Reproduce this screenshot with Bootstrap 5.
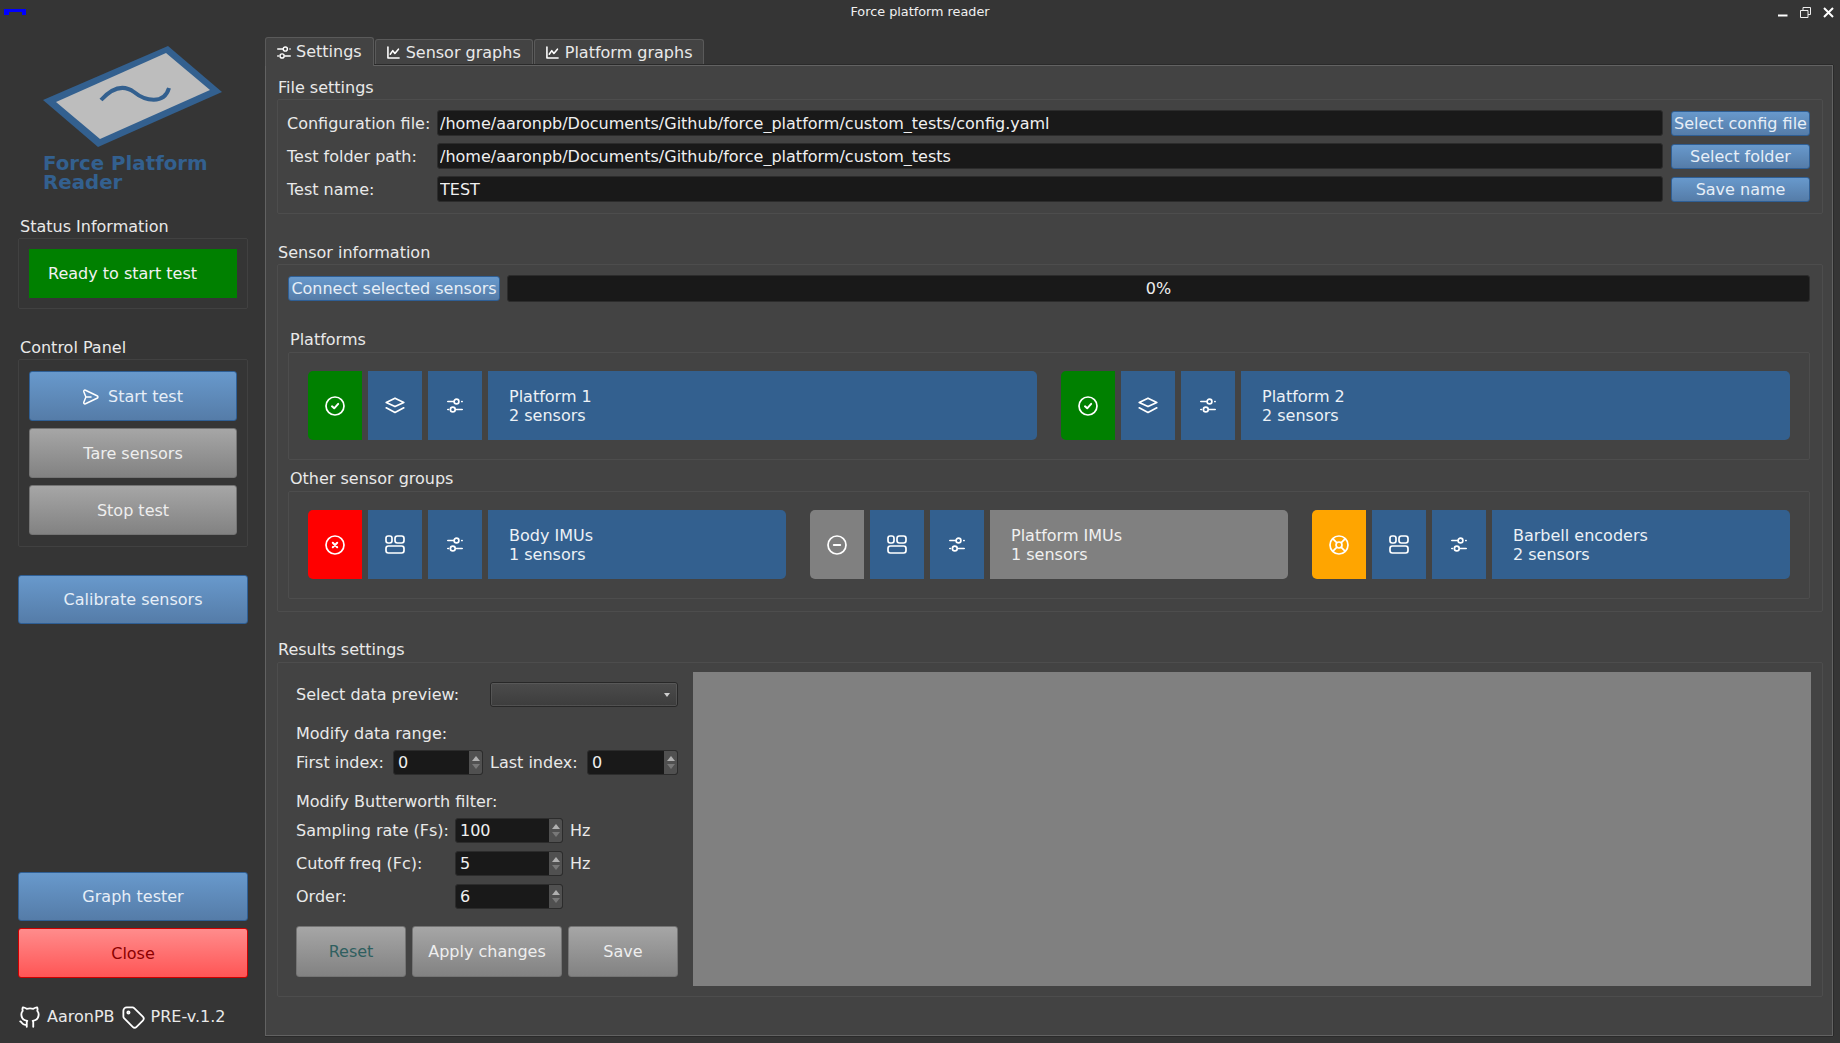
<!DOCTYPE html>
<html lang="en">
<head>
<meta charset="utf-8">
<title>Force platform reader</title>
<link href="https://cdn.jsdelivr.net/npm/bootstrap@5.3.0/dist/css/bootstrap.min.css" rel="stylesheet">
<style>
html,body{height:100%}
body{background:#353535;color:#e9e9e9;font:16px/24px "DejaVu Sans",sans-serif;overflow:hidden}
svg{display:block;flex:none}
.ic{fill:none;stroke:#fff;stroke-width:1.7;stroke-linecap:round;stroke-linejoin:round}
.app{height:1043px;padding-bottom:7px}
.titlebar{height:24px;display:grid;grid-template-columns:1fr auto 1fr;font-size:12.8px;line-height:24px;color:#f0f0f0}
.win-btns{justify-self:end;gap:12px;padding-right:6px}
.sidebar{width:265px;padding:0 17px 0 18px}
.logo{margin-top:16px;height:114px}
.logo-text{margin:0 0 0 25px;font-size:19.8px;font-weight:700;line-height:19px;color:#33608f}
.lbl{height:24px;line-height:26px}
.gbox{border:1px solid #414141;border-radius:2px}
.side-box{padding:10px}
.status{background:#008000;height:49px;line-height:49px;padding-left:19px;color:#f2f2f2}
.q-btn,.q-btn:hover,.q-btn:active,.q-btn:focus{display:flex;align-items:center;justify-content:center;gap:9px;padding:0;font-size:16px;line-height:20px;border-radius:3px;border:1px solid #2f5f95;background:linear-gradient(#6899cc,#557ca8);color:#e6eef7;white-space:nowrap}
.q-gray,.q-gray:hover,.q-gray:active,.q-gray:focus{border-color:#747474;background:linear-gradient(#a6a6a6,#828282);color:#eeeeee}
.q-red,.q-red:hover,.q-red:active,.q-red:focus{border-color:#cc0000;background:linear-gradient(#ff8c8c,#ff5555);color:#8b0000}
.h49{height:49px}.h50{height:50px;padding-top:2px}.h51{height:51px}
.ctrl{padding:11px 10px}
.footer{height:24px;margin:27px 0 7px -1px;line-height:28px}
.tabs-row{margin-top:13px}
.nav-tabs.qt{border:0;gap:1px;height:28px;align-items:flex-end}
.nav-tabs.qt .nav-link{display:flex;align-items:center;height:26px;padding:0 11px 0 11px;gap:6px;margin:0;color:#e9e9e9;background:#434343;border:1px solid #5a5a5a;border-bottom:0;border-radius:3px 3px 0 0;font-size:16px;line-height:24px}
.nav-tabs.qt .nav-link.active{height:29px;margin-bottom:-1px;gap:5px;z-index:1;position:relative}
.pane{background:#434343;border:1px solid #626262;box-shadow:0 -1px 0 #2a2a2a,1px 0 0 #2a2a2a,0 1px 0 #2a2a2a;padding:9px 9px 0 11px;flex:1;min-height:0}
.gb2{border:1px solid #4d4d4d;border-radius:2px}
.file-box{padding:10px 12px 11px 9px}
.file-box .row-f{height:26px;gap:8px}
.f-lbl{width:142px;flex:none;line-height:28px;white-space:nowrap}
.q-input.form-control,.q-input.form-control:focus{flex:1;min-width:0;height:26px;min-height:0;padding:0 2px;background:#191919;border:1px solid #2c2c2c;border-radius:3px;color:#f0f0f0;font-size:16px;line-height:24px;box-shadow:none}
.h25{height:25px}
.sel-btn{width:139px;flex:none;margin-top:1px}
.sensor-box{padding:10px 12px 12px 10px}
.q-progress.progress{height:27px;background:#191919;border:1px solid #2c2c2c;border-radius:3px;font-size:16px;color:#eee}
.sub-lbl{height:25px;line-height:26px;padding-left:2px}
.inner{padding:18px 19px 19px 19px;gap:24px}
.grp{flex:1 1 0;height:69px;gap:6px;min-width:0}
.sw{width:54px;background:#33608f}
.sw.green{background:#008000}.sw.red{background:#ff0000}.sw.orange{background:#ffa500}.sw.gray,.bar.gray{background:#808080}
.sw.first{border-radius:5px 0 0 5px}
.bar{flex:1;background:#33608f;border-radius:0 5px 5px 0;padding-left:21px;line-height:19px;color:#ecf1f6}
.bar.gray{color:#f0f0f0}
.res-box{padding:9px 11px 10px 18px;height:335px;gap:15px}
.res-left{width:382px;flex:none}
.canvas{flex:1;background:#808080}
.combo.btn,.combo.btn:hover{width:188px;height:25px;padding:0 7px 0 0;background:linear-gradient(#4b4b4b,#3d3d3d);border:1px solid #282828;box-shadow:0 0 0 .5px #666 inset;border-radius:3px;justify-content:flex-end}
.combo.dropdown-toggle::after{margin:0;border-top:4px solid #cfcfcf;border-left:3.5px solid transparent;border-right:3.5px solid transparent;border-bottom:0}
.spin{height:25px;border:1px solid #2c2c2c;border-radius:3px;background:#191919;overflow:hidden}
.spin .val{flex:1;padding-left:4px;line-height:23px;color:#f0f0f0}
.spin .arr{width:13px;background:#505050;gap:3px}
.tri-u,.tri-d{width:0;height:0;border-left:4.5px solid transparent;border-right:4.5px solid transparent}
.tri-u{border-bottom:5px solid #b0b0b0}.tri-d{border-top:5px solid #787878}
.w90{width:90px}.w91{width:91px}.w108{width:108px}
.f-short{width:97px;line-height:26px}.f-long{width:159px;line-height:26px}
.hz{margin-left:7px;line-height:26px}
</style>
</head>
<body>
<svg width="0" height="0" class="position-absolute">
<symbol id="i-sliders" viewBox="0 0 16 15"><path d="M.8 3.500h5.900M14.800 3.500h.3M.8 11.500h.7M9.400 11.500h5.800"/><circle cx="9.500" cy="3.500" r="2.400"/><circle cx="5.800" cy="11.500" r="2.400"/></symbol>
<symbol id="i-chart" viewBox="0 0 14 14"><path d="M1 1v12h12M3.500 8.800 6.200 5l2.300 3 3.800-4.600"/></symbol>
<symbol id="i-stack" viewBox="0 0 20 17"><path d="M10 1.200 1.200 5.400 10 9.600l8.800-4.200zM1.200 10.800l8.800 4.600 8.800-4.600"/></symbol>
<symbol id="i-layout" viewBox="0 0 20 19"><rect x="1" y="1" width="6" height="7" rx="2.200"/><rect x="10" y="1" width="9" height="7" rx="2.400"/><rect x="1" y="11" width="18" height="7" rx="2.400"/></symbol>
<symbol id="i-check" viewBox="0 0 20 20"><circle cx="10" cy="10" r="9"/><path d="m7 10.300 2.200 2 4-4.400" stroke-width="2"/></symbol>
<symbol id="i-x" viewBox="0 0 20 20"><circle cx="10" cy="10" r="9"/><path d="m7.800 7.800 4.400 4.400m0-4.400-4.400 4.400" stroke-width="2"/></symbol>
<symbol id="i-minus" viewBox="0 0 20 20"><circle cx="10" cy="10" r="9"/><path d="M6.800 10h6.400" stroke-width="2"/></symbol>
<symbol id="i-buoy" viewBox="0 0 20 20"><circle cx="10" cy="10" r="9"/><circle cx="10" cy="10" r="3"/><path d="m12.300 12.300 3.500 3.500m-8.100-3.500-3.500 3.500m0-11.600 3.500 3.500m8.100-3.500-3.500 3.500"/></symbol>
</svg>
<div class="app d-flex flex-column">
  <header class="titlebar">
    <svg width="30" height="24" viewBox="0 0 30 24"><path fill="#0000ff" d="M4 9h22v3h-4v3h4v-3H9v3H4z"/></svg>
    <div>Force platform reader</div>
    <div class="win-btns d-flex align-items-center">
      <svg width="11" height="12" viewBox="0 0 11 12"><path d="M1 9.500h9.500" stroke="#fff" stroke-width="2"/></svg>
      <svg width="11" height="11" viewBox="0 0 11 11" fill="none" stroke="#eee"><path d="M.5 3.500h7.500v7H.5zM3 3.500V.5h7.500v7H8"/></svg>
      <svg width="11" height="11" viewBox="0 0 11 11"><path d="m1 1 9 9m0-9-9 9" stroke="#fff" stroke-width="2"/></svg>
    </div>
  </header>
  <div class="d-flex flex-grow-1" style="min-height:0">
    <aside class="sidebar d-flex flex-column flex-none">
      <svg class="logo" width="230" viewBox="18 40 230 114">
        <path fill="#33608f" d="M168 46 222 92 98 147 43 100z"/>
        <path fill="#bdbdbd" d="M166 53 210 90 100 139 56 102z"/>
        <path fill="none" stroke="#33608f" stroke-width="4" d="M101 100c11-12 22-16 33-8 11 9 30 13 35-4"/>
      </svg>
      <div class="logo-text">Force Platform<br>Reader</div>
      <div class="lbl" style="margin-top:22px;padding-left:2px">Status Information</div>
      <div class="gbox side-box"><div class="status">Ready to start test</div></div>
      <div class="lbl" style="margin-top:26px;padding-left:2px">Control Panel</div>
      <div class="gbox ctrl d-flex flex-column" style="gap:7px">
        <button class="btn q-btn h50"><svg class="ic" width="16" height="16" viewBox="0 0 16 16" style="stroke-width:1.500"><path d="M2.500 1.200C1.200.8.500 1.700.9 3L2.900 8 .9 13C.5 14.300 1.200 15.200 2.500 14.800L14 9.300C15.300 8.700 15.300 7.300 14 6.700zM3 8h5"/></svg>Start test</button>
        <button class="btn q-btn q-gray h50">Tare sensors</button>
        <button class="btn q-btn q-gray h50">Stop test</button>
      </div>
      <button class="btn q-btn h49" style="margin-top:28px">Calibrate sensors</button>
      <div class="flex-grow-1"></div>
      <button class="btn q-btn h49">Graph tester</button>
      <button class="btn q-btn q-red h50" style="margin-top:7px">Close</button>
      <div class="footer d-flex align-items-center">
        <svg class="ic" width="26" height="26" viewBox="0 0 24 24" style="stroke-width:1.700"><path d="M9 19c-4.300 1.400-4.300-2.500-6-3m12 5v-3.500c0-1 .1-1.400-.5-2 2.800-.3 5.500-1.400 5.500-6a4.600 4.600 0 0 0-1.300-3.200 4.200 4.200 0 0 0-.1-3.200s-1.100-.3-3.500 1.300a12.300 12.300 0 0 0-6.200 0C6.500 2.800 5.400 3.100 5.400 3.100a4.200 4.200 0 0 0-.1 3.200A4.600 4.600 0 0 0 4 9.500c0 4.600 2.700 5.700 5.500 6-.6.6-.6 1.200-.5 2V21"/></svg>
        <span style="margin-left:4px">AaronPB</span>
        <svg class="ic" width="27" height="27" viewBox="0 0 24 24" style="margin-left:5px;stroke-width:1.600"><path d="M7.500 7.500m-1 0a1 1 0 1 0 2 0 1 1 0 1 0-2 0"/><path d="M3 6v5.172a2 2 0 0 0 .586 1.414l7.710 7.710a2.410 2.410 0 0 0 3.408 0l5.592-5.592a2.410 2.410 0 0 0 0-3.408l-7.710-7.710A2 2 0 0 0 11.172 3H6a3 3 0 0 0-3 3z"/></svg>
        <span style="margin-left:4px">PRE-v.1.2</span>
      </div>
    </aside>
    <main class="d-flex flex-column flex-grow-1 tabs-row" style="min-width:0;margin-right:7px">
      <ul class="nav nav-tabs qt">
        <li class="nav-item"><a class="nav-link active" href="#"><svg class="ic" width="14" height="13" style="stroke-width:1.700"><use href="#i-sliders"/></svg>Settings</a></li>
        <li class="nav-item"><a class="nav-link" href="#"><svg class="ic" width="13" height="13"><use href="#i-chart"/></svg>Sensor graphs</a></li>
        <li class="nav-item"><a class="nav-link" href="#"><svg class="ic" width="13" height="13"><use href="#i-chart"/></svg>Platform graphs</a></li>
      </ul>
      <div class="pane d-flex flex-column">
        <div class="lbl" style="padding-left:1px">File settings</div>
        <div class="gb2 file-box d-flex flex-column" style="gap:7px">
          <div class="d-flex align-items-start row-f"><div class="f-lbl">Configuration file:</div><input class="form-control q-input" value="/home/aaronpb/Documents/Github/force_platform/custom_tests/config.yaml"><button class="btn q-btn h25 sel-btn">Select config file</button></div>
          <div class="d-flex align-items-start row-f"><div class="f-lbl">Test folder path:</div><input class="form-control q-input" value="/home/aaronpb/Documents/Github/force_platform/custom_tests"><button class="btn q-btn h25 sel-btn">Select folder</button></div>
          <div class="d-flex align-items-start row-f"><div class="f-lbl">Test name:</div><input class="form-control q-input" value="TEST"><button class="btn q-btn h25 sel-btn">Save name</button></div>
        </div>
        <div class="lbl" style="margin-top:26px;padding-left:1px">Sensor information</div>
        <div class="gb2 sensor-box">
          <div class="d-flex align-items-center" style="gap:7px">
            <button class="btn q-btn h25 flex-none" style="width:212px">Connect selected sensors</button>
            <div class="progress q-progress flex-grow-1 justify-content-center align-items-center">0%</div>
          </div>
          <div class="sub-lbl" style="margin-top:25px">Platforms</div>
          <div class="gb2 inner d-flex">
            <div class="grp d-flex"><div class="sw first green d-flex align-items-center justify-content-center"><svg class="ic" width="20" height="20"><use href="#i-check"/></svg></div><div class="sw d-flex align-items-center justify-content-center"><svg class="ic" width="20" height="17"><use href="#i-stack"/></svg></div><div class="sw d-flex align-items-center justify-content-center"><svg class="ic" width="16" height="15"><use href="#i-sliders"/></svg></div><div class="bar d-flex flex-column justify-content-center"><div>Platform 1</div><div>2 sensors</div></div></div>
            <div class="grp d-flex"><div class="sw first green d-flex align-items-center justify-content-center"><svg class="ic" width="20" height="20"><use href="#i-check"/></svg></div><div class="sw d-flex align-items-center justify-content-center"><svg class="ic" width="20" height="17"><use href="#i-stack"/></svg></div><div class="sw d-flex align-items-center justify-content-center"><svg class="ic" width="16" height="15"><use href="#i-sliders"/></svg></div><div class="bar d-flex flex-column justify-content-center"><div>Platform 2</div><div>2 sensors</div></div></div>
          </div>
          <div class="sub-lbl" style="margin-top:6px">Other sensor groups</div>
          <div class="gb2 inner d-flex">
            <div class="grp d-flex"><div class="sw first red d-flex align-items-center justify-content-center"><svg class="ic" width="20" height="20"><use href="#i-x"/></svg></div><div class="sw d-flex align-items-center justify-content-center"><svg class="ic" width="20" height="19"><use href="#i-layout"/></svg></div><div class="sw d-flex align-items-center justify-content-center"><svg class="ic" width="16" height="15"><use href="#i-sliders"/></svg></div><div class="bar d-flex flex-column justify-content-center"><div>Body IMUs</div><div>1 sensors</div></div></div>
            <div class="grp d-flex"><div class="sw first gray d-flex align-items-center justify-content-center"><svg class="ic" width="20" height="20"><use href="#i-minus"/></svg></div><div class="sw d-flex align-items-center justify-content-center"><svg class="ic" width="20" height="19"><use href="#i-layout"/></svg></div><div class="sw d-flex align-items-center justify-content-center"><svg class="ic" width="16" height="15"><use href="#i-sliders"/></svg></div><div class="bar gray d-flex flex-column justify-content-center"><div>Platform IMUs</div><div>1 sensors</div></div></div>
            <div class="grp d-flex"><div class="sw first orange d-flex align-items-center justify-content-center"><svg class="ic" width="20" height="20"><use href="#i-buoy"/></svg></div><div class="sw d-flex align-items-center justify-content-center"><svg class="ic" width="20" height="19"><use href="#i-layout"/></svg></div><div class="sw d-flex align-items-center justify-content-center"><svg class="ic" width="16" height="15"><use href="#i-sliders"/></svg></div><div class="bar d-flex flex-column justify-content-center"><div>Barbell encoders</div><div>2 sensors</div></div></div>
          </div>
        </div>
        <div class="lbl" style="margin-top:25px;height:25px;padding-left:1px">Results settings</div>
        <div class="gb2 res-box d-flex">
          <div class="res-left d-flex flex-column">
            <div class="d-flex align-items-center justify-content-between" style="height:25px;margin-top:10px"><span>Select data preview:</span><div class="btn combo dropdown-toggle d-flex align-items-center"></div></div>
            <div class="lbl" style="margin-top:14px">Modify data range:</div>
            <div class="d-flex align-items-center" style="margin-top:5px;height:25px"><div class="f-short">First index:</div><div class="spin w90 d-flex"><div class="val">0</div><div class="arr d-flex flex-column align-items-center justify-content-center"><i class="tri-u"></i><i class="tri-d"></i></div></div><div class="f-short" style="margin-left:7px">Last index:</div><div class="spin w91 d-flex"><div class="val">0</div><div class="arr d-flex flex-column align-items-center justify-content-center"><i class="tri-u"></i><i class="tri-d"></i></div></div></div>
            <div class="lbl" style="margin-top:14px">Modify Butterworth filter:</div>
            <div class="d-flex align-items-center" style="margin-top:5px;height:25px"><div class="f-long">Sampling rate (Fs):</div><div class="spin w108 d-flex"><div class="val">100</div><div class="arr d-flex flex-column align-items-center justify-content-center"><i class="tri-u"></i><i class="tri-d"></i></div></div><div class="hz">Hz</div></div>
            <div class="d-flex align-items-center" style="margin-top:8px;height:25px"><div class="f-long">Cutoff freq (Fc):</div><div class="spin w108 d-flex"><div class="val">5</div><div class="arr d-flex flex-column align-items-center justify-content-center"><i class="tri-u"></i><i class="tri-d"></i></div></div><div class="hz">Hz</div></div>
            <div class="d-flex align-items-center" style="margin-top:8px;height:25px"><div class="f-long">Order:</div><div class="spin w108 d-flex"><div class="val">6</div><div class="arr d-flex flex-column align-items-center justify-content-center"><i class="tri-u"></i><i class="tri-d"></i></div></div></div>
            <div class="d-flex" style="gap:6px;margin-top:17px">
              <button class="btn q-btn q-gray h51" style="width:110px;color:#2f5f5f">Reset</button>
              <button class="btn q-btn q-gray h51" style="width:150px">Apply changes</button>
              <button class="btn q-btn q-gray h51" style="width:110px">Save</button>
            </div>
          </div>
          <div class="canvas"></div>
        </div>
      </div>
    </main>
  </div>
</div>
<script src="https://cdn.jsdelivr.net/npm/bootstrap@5.3.0/dist/js/bootstrap.bundle.min.js"></script>
</body>
</html>
